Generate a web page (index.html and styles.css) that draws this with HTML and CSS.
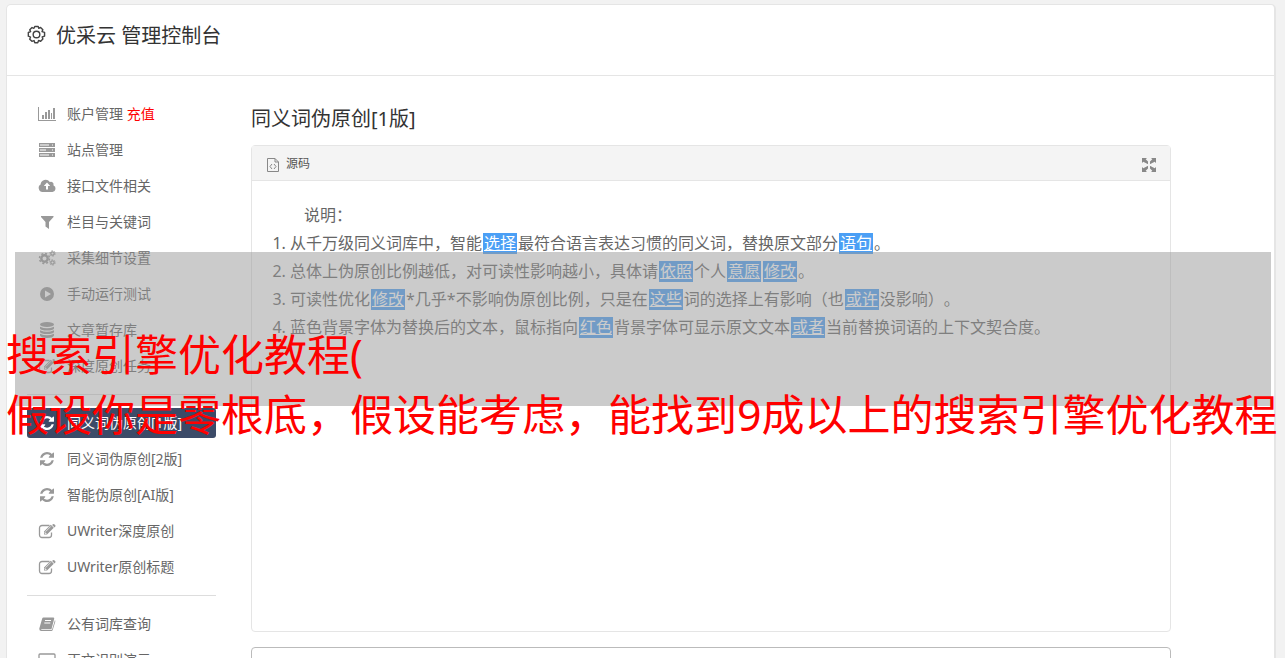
FILE: index.html
```html
<!DOCTYPE html>
<html lang="zh-CN">
<head>
    <meta charset="UTF-8">
    <meta name="viewport" content="width=device-width, initial-scale=1.0">
    <title>优采云 管理控制台</title>
    <link rel="stylesheet" href="styles.css">
</head>
<body>
    <!-- shared icons -->
    <svg class="sprite" aria-hidden="true">
        <symbol id="i-refresh" viewBox="0 0 1536 1536"><path d="M1511 928q0 5-1 7-64 268-268 434.500T764 1536q-146 0-282.500-55T238 1324l-129 129q-19 19-45 19t-45-19-19-45V960q0-26 19-45t45-19h448q26 0 45 19t19 45-19 45l-137 137q71 66 161 102t187 36q134 0 250-65t186-179q11-17 53-117 8-23 30-23h192q13 0 22.500 9.500t9.500 22.500zm25-800v448q0 26-19 45t-45 19h-448q-26 0-45-19t-19-45 19-45l138-138Q969 256 768 256q-134 0-250 65T332 500q-11 17-53 117-8 23-30 23H50q-13 0-22.500-9.500T18 608v-7q65-268 270-434.500T768 0q146 0 284 55.500T1297 212l130-129q19-19 45-19t45 19 19 45z"/></symbol>
        <symbol id="i-edit" viewBox="0 0 18 16"><path d="M13.500 9.500v2.500a2.500 2.500 0 0 1-2.500 2.500H4A2.500 2.500 0 0 1 1.500 12V5A2.500 2.500 0 0 1 4 2.500h7.500" fill="none" stroke="currentColor" stroke-width="1.300"/><path d="M6 8.500 12.800 1.700l3 3L9 11.500H6z M14.900 1.200q.7-.6 1.400 0l1 1q.6.700 0 1.400l-.8.800-2.400-2.400z"/><path d="M7.500 8.700 12.800 3.400M7 9v1.500h1.500" stroke="#fff" stroke-width=".7" fill="none"/></symbol>
    </svg>

    <div class="page">
        <header class="page-header">
            <svg class="gear" viewBox="0 0 20 20" fill="none" stroke="currentColor" stroke-width="1.500" stroke-linejoin="round"><path d="M8.200 1.500h3.600l.6 2 1.900-.9 2.400 2.400-.9 1.900 2.700.9v3.900l-2.500.9.700 2.200-2.300 2.300-2.200-.8-.9 2.300H8.200l-.8-2.200-2.200.8-2.300-2.300.8-2.200-2.300-.9V7.900l2.400-.9-.9-1.900 2.400-2.400 2 .8z"/><circle cx="10" cy="10" r="3.500"/></svg>
            <h1>优采云 管理控制台</h1>
        </header>

        <div class="columns">
            <nav class="sidebar">
                <ul>
                    <li><a href="#"><svg viewBox="0 0 18 16"><path d="M0 1h1v13h17v1H0zM4 9h2v4H4zM7 6h2v7H7zM10 4h2v9h-2zM13 7h1v6h-1zM15 2h2v11h-2z"/></svg>账户管理 <span class="recharge">充值</span></a></li>
                    <li><a href="#"><svg viewBox="0 0 18 16"><path d="M1 1h16v4H1zM1 6h16v4H1zM1 11h16v4H1z"/><path d="M2 3h9M2 8h6M2 13h9M14 3h1M14 8h1M14 13h1" stroke="#fff"/></svg>站点管理</a></li>
                    <li><a href="#"><svg viewBox="0 0 18 16"><path d="M4.500 14A4 4 0 0 1 2.600 6.600 5 5 0 0 1 11.800 4a2.600 2.600 0 0 1 3.600 3.300A3.500 3.500 0 0 1 14.500 14z"/><path d="M9 4.500 5.800 8H8v3.500h2V8h2.200z" fill="#fff"/></svg>接口文件相关</a></li>
                    <li><a href="#"><svg viewBox="0 0 18 16"><path d="M3 2h12.500v1L11 8v7l-3.500-2.500V8L3 3z"/></svg>栏目与关键词</a></li>
                    <li><a href="#"><svg viewBox="0 0 18 16" fill="none" stroke="currentColor"><circle cx="6.500" cy="8.500" r="3.200" stroke-width="2.400"/><circle cx="6.500" cy="8.500" r="5" stroke-width="1.500" stroke-dasharray="2 1.930"/><circle cx="14.500" cy="3.500" r="1.700" stroke-width="1.300"/><circle cx="14.500" cy="3.500" r="2.700" stroke-dasharray="1.400 1.420"/><circle cx="14.500" cy="12.500" r="1.700" stroke-width="1.300"/><circle cx="14.500" cy="12.500" r="2.700" stroke-dasharray="1.400 1.420"/></svg>采集细节设置</a></li>
                    <li><a href="#"><svg viewBox="0 0 18 16"><path fill-rule="evenodd" d="M9 1a7 7 0 1 1 0 14A7 7 0 0 1 9 1zM7 4.500v7L13 8z"/></svg>手动运行测试</a></li>
                    <li><a href="#"><svg viewBox="0 0 18 16"><ellipse cx="9" cy="2.500" rx="7" ry="2.500"/><path d="M2 4.800q7 3 14 0v1.700q-1 2-7 2T2 6.500zM2 8.300q7 3 14 0V10q-1 2-7 2t-7-2zM2 11.800q7 3 14 0v1.700q-1 2.500-7 2.500t-7-2.500z"/></svg>文章暂存库</a></li>
                    <li><a href="#"><svg><use href="#i-edit"/></svg>深度原创任务</a></li>
                </ul>
                <hr>
                <ul>
                    <li><a class="active" href="#"><svg class="round"><use href="#i-refresh"/></svg>同义词伪原创[1版]</a></li>
                    <li><a href="#"><svg class="round"><use href="#i-refresh"/></svg>同义词伪原创[2版]</a></li>
                    <li><a href="#"><svg class="round"><use href="#i-refresh"/></svg>智能伪原创[AI版]</a></li>
                    <li><a href="#"><svg><use href="#i-edit"/></svg>UWriter深度原创</a></li>
                    <li><a href="#"><svg><use href="#i-edit"/></svg>UWriter原创标题</a></li>
                </ul>
                <hr>
                <ul>
                    <li><a href="#"><svg viewBox="0 0 18 16"><path d="M5.500 1.500h10q1 .2.700 1.200L13.500 13H4q-1 0-1 .7h11L17 4q.5 1 .2 2l-2.500 8q-.3 1-1.400 1H3q-2-.3-1.700-2.500L4.200 2.500q.3-.8 1.300-1z"/><path d="M7 4.500h6M6.300 7h6" stroke="#fff"/></svg>公有词库查询</a></li>
                    <li><a href="#"><svg viewBox="0 0 18 16" fill="none" stroke="currentColor" stroke-width="1.300"><rect x="1" y="2" width="16" height="10" rx="1"/><path d="M5 14.500h8"/></svg>正文识别演示</a></li>
                </ul>
            </nav>

            <main class="content">
                <h2>同义词伪原创[1版]</h2>
                <section class="editor">
                    <div class="toolbar">
                        <button type="button"><svg viewBox="0 0 12 14" fill="none" stroke="currentColor"><path d="M.5.500h7.500l3.500 3.500v9.500H.5zM8 .500V4h3.500M5 6 3 8.500 5 11M7 6l2 2.500L7 11"/></svg>源码</button>
                        <button type="button" class="expand" aria-label="全屏"><svg viewBox="0 0 14 14"><path d="M0 0h5L3.700 1.300 6 3.600V6H5.600L1.300 3.700 0 5zM14 0H9l1.300 1.300L8 3.600V6h.4l4.300-2.300L14 5zM0 14h5l-1.300-1.300L6 10.400V8h-.4l-4.300 2.300L0 9zM14 14H9l1.300-1.300L8 10.400V8h.4l4.300 2.300L14 9z"/></svg></button>
                    </div>
                    <div class="editor-body">
                        <p>说明：</p>
                        <ol>
                            <li>从千万级同义词库中，智能<mark>选择</mark>最符合语言表达习惯的同义词，替换原文部分<mark>语句</mark>。</li>
                            <li>总体上伪原创比例越低，对可读性影响越小，具体请<mark>依照</mark>个人<mark>意愿</mark><mark>修改</mark>。</li>
                            <li>可读性优化<mark>修改</mark>*几乎*不影响伪原创比例，只是在<mark>这些</mark>词的选择上有影响（也<mark>或许</mark>没影响）。</li>
                            <li>蓝色背景字体为替换后的文本，鼠标指向<mark>红色</mark>背景字体可显示原文文本<mark>或者</mark>当前替换词语的上下文契合度。</li>
                        </ol>
                    </div>
                </section>
                <textarea class="result" aria-label="原文"></textarea>
            </main>
        </div>
    </div>

    <div class="shade"></div>
    <div class="caption">搜索引擎优化教程(<br>假设你是零根底，假设能考虑，能找到9成以上的搜索引擎优化教程</div>
</body>
</html>
```
FILE: styles.css
```css
* {
    box-sizing: border-box;
}
body {
    margin: 0;
    padding: 4px 9px 0 6px;
    height: 100vh;
    overflow: hidden;
    position: relative;
    background: #f2f2f2;
    color: #666;
    font-family: "Noto Sans", "Noto Sans CJK SC", sans-serif;
    font-size: 14px;
    text-spacing-trim: space-all;
}
h1, h2 {
    margin: 0;
    font-size: 20px;
    font-weight: normal;
    line-height: 30px;
    color: #333;
}
.sprite {
    position: absolute;
    width: 0;
    height: 0;
}
.page {
    height: 100%;
    overflow: hidden;
    background: #fff;
    border: 1px solid #e5e5e5;
    border-right-width: 2px;
    border-bottom: 0;
    border-radius: 5px 5px 0 0;
}
.page-header {
    display: flex;
    gap: 10px;
    height: 71px;
    padding: 16px 20px;
    border-bottom: 1px solid #e5e5e5;
}
.gear {
    width: 19px;
    height: 19px;
    margin-top: 4px;
    color: #444;
}
.columns {
    display: grid;
    grid-template-columns: 189px 1fr;
    gap: 35px;
    padding: 23px 103px 0 20px;
}

/* left menu */
.sidebar ul {
    display: grid;
    gap: 6px;
    margin: 0;
    padding: 0;
    list-style: none;
}
.sidebar a {
    display: flex;
    align-items: center;
    height: 30px;
    padding: 0 0 2px 11px;
    border-radius: 3px;
    color: #666;
    text-decoration: none;
    white-space: pre;
}
.sidebar svg {
    width: 18px;
    height: 16px;
    margin: 2px 11px 0 0;
    color: #999;
}
.sidebar svg:not([fill]) {
    fill: currentColor;
}
.sidebar svg.round {
    width: 14px;
    height: 14px;
    margin: 2px 13px 0 2px;
}
.sidebar .active, .sidebar .active svg {
    color: #fff;
}
.sidebar .active {
    background: #3c4b68;
}
.sidebar hr {
    margin: 13px 0;
    border: 0;
    border-top: 1px solid #ddd;
}
.recharge {
    color: #f00;
}

/* editor */
.content {
    min-width: 0;
    padding-top: 5px;
}
.editor {
    height: 487px;
    margin: 11px 0 15px;
    border: 1px solid #e5e5e5;
    border-radius: 4px;
}
.toolbar {
    display: flex;
    justify-content: space-between;
    height: 35px;
    padding: 0 14px 0 15px;
    background: #f4f4f4;
    border-bottom: 1px solid #e5e5e5;
}
.toolbar button {
    display: flex;
    align-items: center;
    gap: 7px;
    padding: 0;
    border: 0;
    background: none;
    color: #555;
    font-family: inherit;
    font-size: 12px;
}
.toolbar svg {
    width: 12px;
    height: 14px;
    margin-top: 3px;
    color: #888;
}
.toolbar .expand svg {
    width: 14px;
    fill: currentColor;
}
.editor-body {
    padding: 20px;
    font-size: 16px;
    line-height: 28px;
}
.editor-body p {
    margin: 0;
    text-indent: 2em;
}
.editor-body ol {
    margin: 0;
    padding-left: 18px;
}
mark {
    margin: 0 1px;
    padding: 0 1px;
    /* glyph box of the CJK font is taller than the highlight */
    background: linear-gradient(#4b9ff5, #4b9ff5) center / 100% 21px no-repeat;
    color: #fff;
    text-decoration: underline;
}
.result {
    display: block;
    width: 100%;
    height: 200px;
    border: 1px solid #bbb;
    border-radius: 4px;
    resize: none;
}

/* banner on top of the page */
.shade {
    position: absolute;
    top: 252px;
    left: 15px;
    right: 14px;
    height: 154px;
    background: rgba(151, 151, 151, 0.5);
}
.caption {
    position: absolute;
    top: 325px;
    left: 6px;
    color: #f00;
    font-size: 43px;
    line-height: 60px;
    white-space: nowrap;
}
```
